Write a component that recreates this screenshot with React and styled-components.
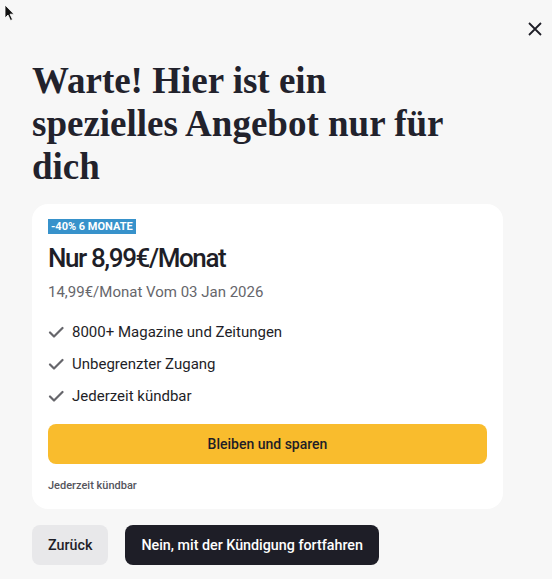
import styled, { createGlobalStyle } from "styled-components";

const GlobalStyle = createGlobalStyle`
  html, body {
    margin: 0;
    padding: 0;
    background: #f7f7f7;
  }
  body {
    font-family: Roboto, "Noto Sans", sans-serif;
    color: #1e1e27;
  }
`;

const features = [
  "8000+ Magazine und Zeitungen",
  "Unbegrenzter Zugang",
  "Jederzeit kündbar",
];

const CheckIcon = () => (
  <svg width="16" height="16" viewBox="0 0 16 16" fill="none">
    <path
      d="M2 8.5l4 4L14.5 4"
      stroke="#66666b"
      strokeWidth="2.2"
      strokeLinecap="round"
      strokeLinejoin="round"
    />
  </svg>
);

const App = () => {
  return (
    <>
      <GlobalStyle />
      <Cursor width="12" height="18" viewBox="0 0 12 18">
        <path d="M1 1v13l3-3 2.5 5.5 2-1-2.5-5.3H10z" fill="#111" stroke="#fff" strokeWidth="0.8" />
      </Cursor>
      <Page>
        <TopBar>
          <CloseButton aria-label="Schließen">
            <svg width="16" height="16" viewBox="0 0 16 16">
              <path
                d="M2 2L14 14M14 2L2 14"
                stroke="#1e1e27"
                strokeWidth="1.8"
              />
            </svg>
          </CloseButton>
        </TopBar>
        <Heading>Warte! Hier ist ein spezielles Angebot nur für dich</Heading>
        <Card>
          <Badge>-40% 6 Monate</Badge>
          <Price>Nur 8,99€/Monat</Price>
          <OldPrice>14,99€/Monat Vom 03 Jan 2026</OldPrice>
          <FeatureList>
            {features.map((f) => (
              <Feature key={f}>
                <CheckIcon />
                {f}
              </Feature>
            ))}
          </FeatureList>
          <StayButton>Bleiben und sparen</StayButton>
          <Note>Jederzeit kündbar</Note>
        </Card>
        <Actions>
          <Button>Zurück</Button>
          <Button $dark>Nein, mit der Kündigung fortfahren</Button>
        </Actions>
      </Page>
    </>
  );
};

export default App;

const Cursor = styled.svg`
  position: absolute;
  left: 4px;
  top: 4px;
`;

const Page = styled.div`
  width: 552px;
  height: 579px;
  box-sizing: border-box;
  padding: 17px 0 0 32px;
  display: flex;
  flex-direction: column;
`;

const TopBar = styled.div`
  display: flex;
  justify-content: flex-end;
  padding-right: 5px;
`;

const CloseButton = styled.button`
  border: none;
  background: none;
  padding: 4px;
  width: 24px;
  height: 24px;
  display: flex;
  align-items: center;
  justify-content: center;
  cursor: pointer;
`;

const Heading = styled.h1`
  margin: 18px 0 0;
  width: 440px;
  font-family: "Liberation Serif", "DejaVu Serif", serif;
  font-weight: 700;
  font-size: 37px;
  line-height: 43px;
  color: #22222c;
`;

const Card = styled.div`
  margin-top: 16px;
  width: 471px;
  box-sizing: border-box;
  background: #ffffff;
  border-radius: 16px;
  padding: 15px 16px 16px;
  display: flex;
  flex-direction: column;
  align-items: flex-start;
`;

const Badge = styled.span`
  background: #3792cb;
  color: #ffffff;
  font-size: 11px;
  font-weight: 700;
  text-transform: uppercase;
  line-height: 15px;
  padding: 0 3px;
`;

const Price = styled.div`
  margin-top: 8px;
  font-size: 26px;
  font-weight: 500;
  letter-spacing: -1.4px;
  line-height: 32px;
  color: #1e1e27;
`;

const OldPrice = styled.div`
  margin-top: 9px;
  font-size: 15px;
  color: #66666b;
  line-height: 18px;
`;

const FeatureList = styled.ul`
  list-style: none;
  margin: 22px 0 0;
  padding: 0;
  display: flex;
  flex-direction: column;
  gap: 14px;
`;

const Feature = styled.li`
  display: flex;
  align-items: center;
  gap: 8px;
  font-size: 15px;
  line-height: 18px;
  color: #1e1e27;
`;

const StayButton = styled.button`
  margin-top: 19px;
  width: 100%;
  height: 40px;
  border: none;
  border-radius: 8px;
  background: #f9bc2d;
  color: #1e1e27;
  font-family: Roboto, sans-serif;
  font-size: 14px;
  font-weight: 500;
  cursor: pointer;
`;

const Note = styled.div`
  margin-top: 15px;
  font-size: 11px;
  font-weight: 500;
  color: #55555c;
  line-height: 14px;
`;

const Actions = styled.div`
  margin-top: 16px;
  display: flex;
  gap: 17px;
`;

const Button = styled.button`
  height: 40px;
  padding: 0 16px;
  border: none;
  border-radius: 8px;
  background: ${(p) => (p.$dark ? "#1e1e27" : "#e8e8ea")};
  color: ${(p) => (p.$dark ? "#ffffff" : "#1e1e27")};
  font-family: Roboto, sans-serif;
  font-size: 14.3px;
  font-weight: 500;
  cursor: pointer;
`;
